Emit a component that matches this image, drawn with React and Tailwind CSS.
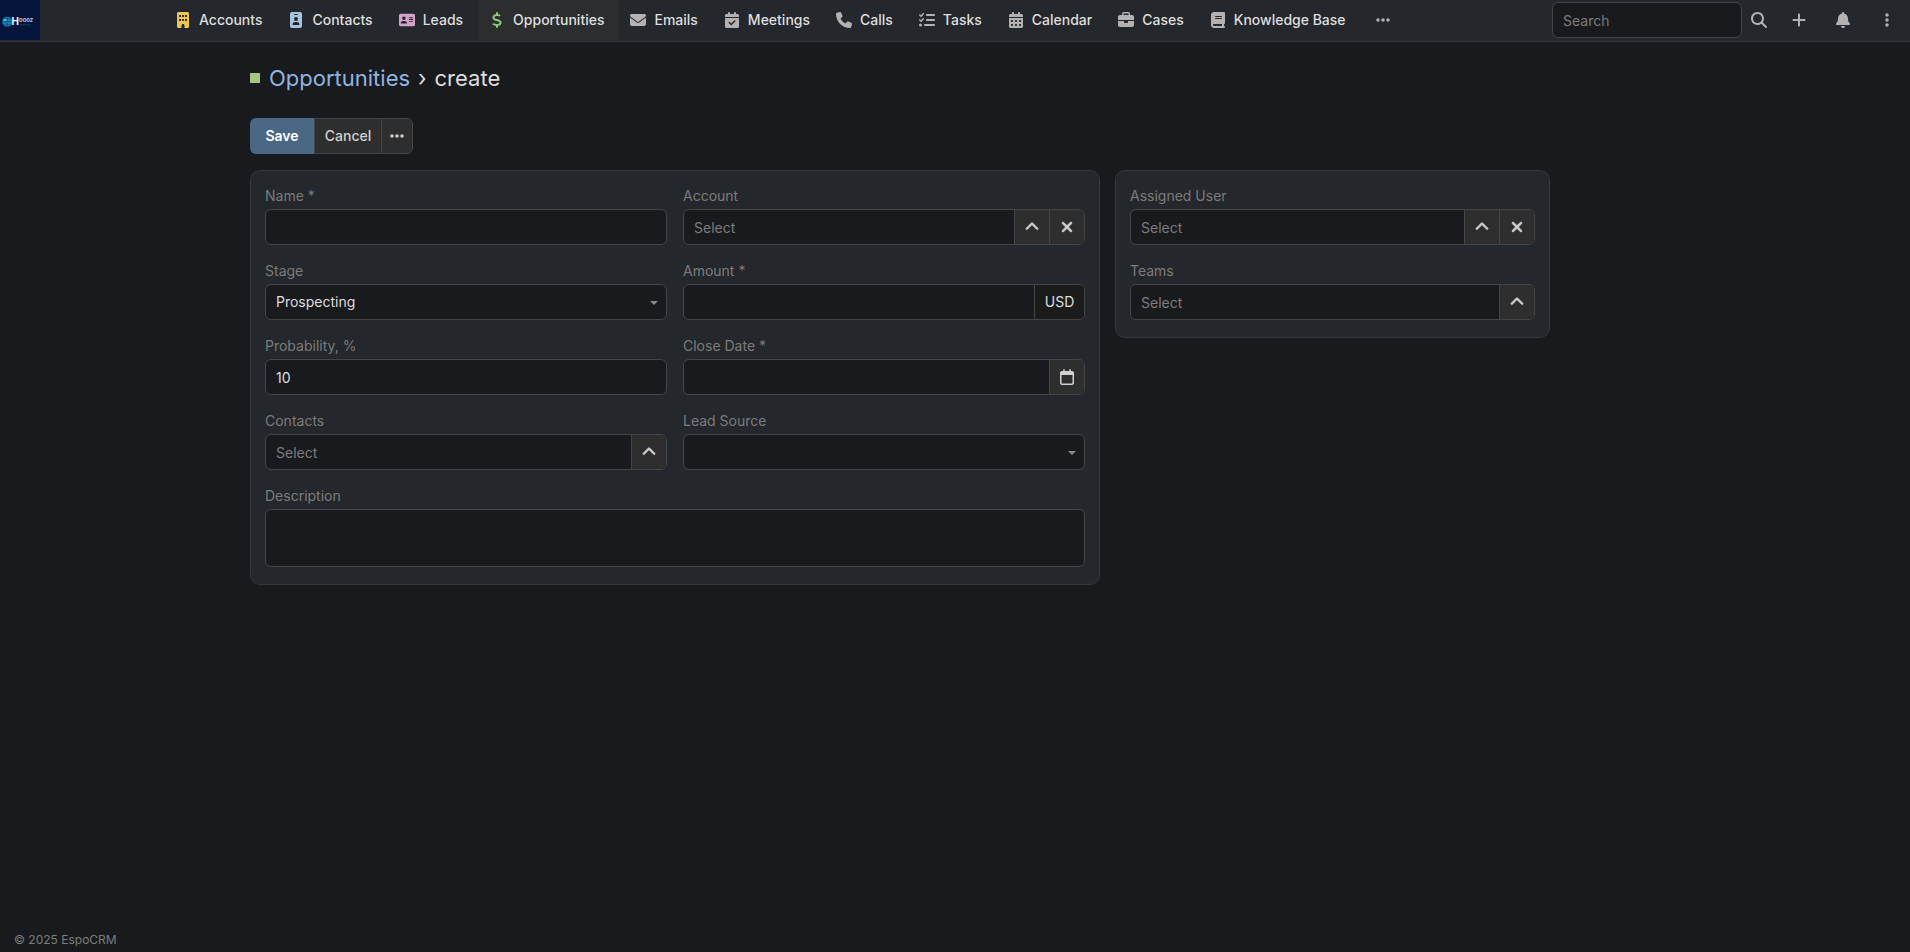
import {
  FaAddressCard, FaBell, FaBook, FaBriefcase, FaBuilding, FaCalendarCheck, FaCalendarDays,
  FaChevronUp, FaDollarSign, FaEllipsis, FaEllipsisVertical, FaEnvelope, FaIdBadge,
  FaListCheck, FaMagnifyingGlass, FaPhone, FaPlus, FaRegCalendar, FaXmark,
} from 'react-icons/fa6';

const tabs = [
  { label: 'Accounts', icon: FaBuilding, color: 'text-[#edc555]' },
  { label: 'Contacts', icon: FaIdBadge, color: 'text-[#a4c5e0]' },
  { label: 'Leads', icon: FaAddressCard, color: 'text-[#d6a2c9]' },
  { label: 'Opportunities', icon: FaDollarSign, color: 'text-[#8cc878]', active: true },
  { label: 'Emails', icon: FaEnvelope },
  { label: 'Meetings', icon: FaCalendarCheck },
  { label: 'Calls', icon: FaPhone },
  { label: 'Tasks', icon: FaListCheck },
  { label: 'Calendar', icon: FaCalendarDays },
  { label: 'Cases', icon: FaBriefcase },
  { label: 'Knowledge Base', icon: FaBook },
];

const box = 'flex h-9 overflow-hidden rounded-md border border-[#434546] bg-[#191a1d]';
const control = 'h-full min-w-0 flex-1 bg-transparent px-[10px] text-[#dedede] outline-none placeholder:text-[#7c7c7c]';
const addon = 'flex w-[35px] shrink-0 items-center justify-center border-l border-[#434546] bg-[#2e2e2e] text-[#d0d0d0]';

function Logo() {
  return (
    <svg viewBox="0 0 40 40" className="size-10" role="img" aria-label="Hoooz">
      <rect width="40" height="40" fill="#04143a" />
      <circle cx="7.2" cy="21.7" r="5" fill="#1d7fae" />
      <path d="M2.2 21.7h10M7.2 16.7v10M3.7 18.7h7M3.7 24.7h7" stroke="#0a4a78" strokeWidth="0.7" />
      <path d="M3.5 19h3v2h-3z" fill="#49b4d4" />
      <text x="11.5" y="25" fill="#f2f5f8" fontFamily="Inter, sans-serif" fontSize="10" fontWeight="700">H</text>
      <text x="19" y="22" fill="#d0d7e0" fontFamily="Inter, sans-serif" fontSize="6" fontWeight="600">oooz</text>
      <path d="M20 24.7h11" stroke="#135272" strokeWidth="0.9" strokeDasharray="2 0.7" />
    </svg>
  );
}

function Field({ id, label, className = '', children }) {
  return (
    <div className={className}>
      <label htmlFor={id} className="mb-[3px] block w-fit leading-5 text-[#7c7c7c]">{label}</label>
      {children}
    </div>
  );
}

function TextField({ id, label, value }) {
  return (
    <Field id={id} label={label}>
      <div className={box}><input id={id} type="text" defaultValue={value} className={control} /></div>
    </Field>
  );
}

function LinkField({ id, label, clearable }) {
  return (
    <Field id={id} label={label}>
      <div className={box}>
        <input id={id} type="text" placeholder="Select" className={control} />
        <button type="button" aria-label={`Select ${label}`} className={addon}>
          <FaChevronUp size={14} className="overflow-visible stroke-current stroke-[26px]" />
        </button>
        {clearable && (
          <button type="button" aria-label={`Clear ${label}`} className={addon}>
            <FaXmark size={16} className="overflow-visible stroke-current stroke-[20px]" />
          </button>
        )}
      </div>
    </Field>
  );
}

function SelectField({ id, label, options }) {
  return (
    <Field id={id} label={label}>
      <div className={`relative ${box}`}>
        <select id={id} className={`appearance-none ${control}`}>
          {options.map((o) => <option key={o} className="bg-[#191a1d]">{o}</option>)}
        </select>
        <svg viewBox="0 0 8 4" className="pointer-events-none absolute top-4 right-2 h-1 w-2 fill-[#8a8a8a]" aria-hidden="true">
          <path d="M0 0h8L4 4z" />
        </svg>
      </div>
    </Field>
  );
}

export default function App() {
  return (
    <div className="flex min-h-screen flex-col bg-[#191a1d] font-[Inter,sans-serif] text-sm text-[#dedede]">
      <header className="flex h-[42px] shrink-0 items-start border-b border-[#36383b] bg-[#24272b]">
        <a href="#home" className="shrink-0"><Logo /></a>
        <nav className="ml-[124px] flex h-10 items-stretch font-medium">
          {tabs.map(({ label, icon: Icon, color, active }) => (
            <a
              key={label}
              href={`#${label}`}
              className={`flex items-center gap-[6px] pr-[15px] pl-[9px] whitespace-nowrap ${active ? 'bg-[#2c2d2e]' : ''}`}
            >
              <span className={`flex w-5 justify-center ${color ?? 'text-[#b3b1b1]'}`}><Icon size={16} /></span>
              {label}
            </a>
          ))}
          <button type="button" aria-label="More tabs" className="px-[14px] text-[#b3b1b1]"><FaEllipsis size={16} /></button>
        </nav>
        <div className="ml-auto flex h-10 items-center text-[#b3b1b1]">
          <input
            type="search"
            aria-label="Search"
            placeholder="Search"
            className="h-9 w-[190px] rounded-md border border-[#434546] bg-[#191a1d] px-[10px] outline-none placeholder:text-[#7c7c7c]"
          />
          <button type="button" aria-label="Run search" className="flex w-[34px] justify-center"><FaMagnifyingGlass size={16} /></button>
          <button type="button" aria-label="Create" className="flex w-[46px] justify-center"><FaPlus size={16} /></button>
          <button type="button" aria-label="Notifications" className="flex w-[42px] justify-center"><FaBell size={16} /></button>
          <button type="button" aria-label="Menu" className="flex w-[46px] justify-center"><FaEllipsisVertical size={16} /></button>
        </div>
      </header>

      <main className="flex-1 pr-[360px] pl-[250px]">
        <h1 className="flex items-center pt-5 pb-6 text-[22px] leading-8">
          <span className="mr-[9px] size-[10px] bg-[#a3c87e]" />
          <a href="#Opportunities" className="text-[#8fb5e0]">Opportunities</a>
          <span className="mx-2">›</span>
          <span>create</span>
        </h1>

        <div className="mb-4 flex h-9 w-fit font-medium">
          <button type="button" className="w-16 rounded-l-md bg-[#4a6783] font-semibold text-white">Save</button>
          <button type="button" className="w-[67px] border-y border-l border-[#434546] bg-[#2e2e2e] text-[#d0d0d0]">Cancel</button>
          <button type="button" aria-label="More actions" className="flex w-8 items-center justify-center rounded-r-md border border-[#434546] bg-[#2e2e2e] text-[#d0d0d0]">
            <FaEllipsis size={16} />
          </button>
        </div>

        <div className="grid grid-cols-[850fr_435fr] items-start gap-[15px]">
          <section className="grid grid-cols-2 gap-4 rounded-[10px] border border-[#36383b] bg-[#24272b] px-[14px] pt-[15px] pb-[17px]">
            <TextField id="name" label="Name *" />
            <LinkField id="account" label="Account" clearable />
            <SelectField id="stage" label="Stage" options={['Prospecting', 'Qualification', 'Proposal', 'Negotiation', 'Closed Won', 'Closed Lost']} />
            <Field id="amount" label="Amount *">
              <div className={box}>
                <input id="amount" type="text" className={control} />
                <span className="flex w-[50px] items-center justify-center border-l border-[#434546] bg-[#1b1b1b]">USD</span>
              </div>
            </Field>
            <TextField id="probability" label="Probability, %" value="10" />
            <Field id="closeDate" label="Close Date *">
              <div className={box}>
                <input id="closeDate" type="text" className={control} />
                <button type="button" aria-label="Pick a date" className={addon}><FaRegCalendar size={16} /></button>
              </div>
            </Field>
            <LinkField id="contacts" label="Contacts" />
            <SelectField id="leadSource" label="Lead Source" options={['', 'Call', 'Email', 'Partner', 'Web Site']} />
            <Field id="description" label="Description" className="col-span-2">
              <textarea id="description" className="block h-[58px] w-full resize-none rounded-md border border-[#434546] bg-[#191a1d] px-[10px] py-2 outline-none" />
            </Field>
          </section>

          <section className="grid gap-4 rounded-[10px] border border-[#36383b] bg-[#24272b] px-[14px] pt-[15px] pb-[17px]">
            <LinkField id="assignedUser" label="Assigned User" clearable />
            <LinkField id="teams" label="Teams" />
          </section>
        </div>
      </main>

      <footer className="px-[14px] pb-[3px] text-xs leading-[18px] text-[#7c7c7c]">
        © 2025 <a href="#EspoCRM">EspoCRM</a>
      </footer>
    </div>
  );
}
